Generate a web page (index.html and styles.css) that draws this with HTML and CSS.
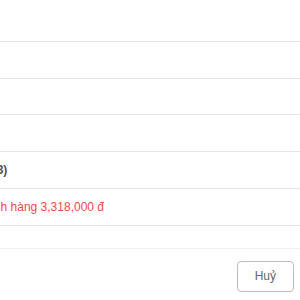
FILE: index.html
```html
<!DOCTYPE html>
<html lang="vi">
<head>
  <meta charset="UTF-8">
  <meta name="viewport" content="width=device-width, initial-scale=1.0">
  <title>Chi tiết đơn hàng</title>
  <link rel="stylesheet" href="styles.css">
</head>
<body>
  <div class="modal">
    <div class="modal-body">
      <div class="row"></div>
      <div class="row"></div>
      <div class="row"></div>
      <div class="row"></div>
      <div class="row"><strong class="title">Sản phẩm (3)</strong></div>
      <div class="row"><span class="debt">Còn nợ khách hàng 3,318,000 đ</span></div>
    </div>
    <div class="modal-footer">
      <button class="btn">Huỷ</button>
    </div>
  </div>
</body>
</html>
```
FILE: styles.css
```css
html, body { margin: 0; background: #fff; overflow: hidden; }
body { font-family: "Liberation Sans", Arial, sans-serif; font-size: 12px; color: #555; }

.modal { margin-left: -84px; }
.modal-body { padding: 5px 0 22px; }

.row {
  display: flex;
  align-items: center;
  height: 36.8px;
  box-sizing: border-box;
  padding: 0 16px;
  border-bottom: 1px solid #e6e6e6;
  white-space: nowrap;
}
.title { font-weight: bold; color: #4f4f58; }
.debt { color: #f04848; }

.modal-footer {
  display: flex;
  justify-content: flex-end;
  padding: 12px 6px 0 0;
  border-top: 1px solid #f0f0f0;
}
.btn {
  height: 31px;
  padding: 0 17px;
  font-family: inherit;
  font-size: 12px;
  color: #666;
  background: #fff;
  border: 1px solid #bdbdbd;
  border-radius: 4px;
}
```
